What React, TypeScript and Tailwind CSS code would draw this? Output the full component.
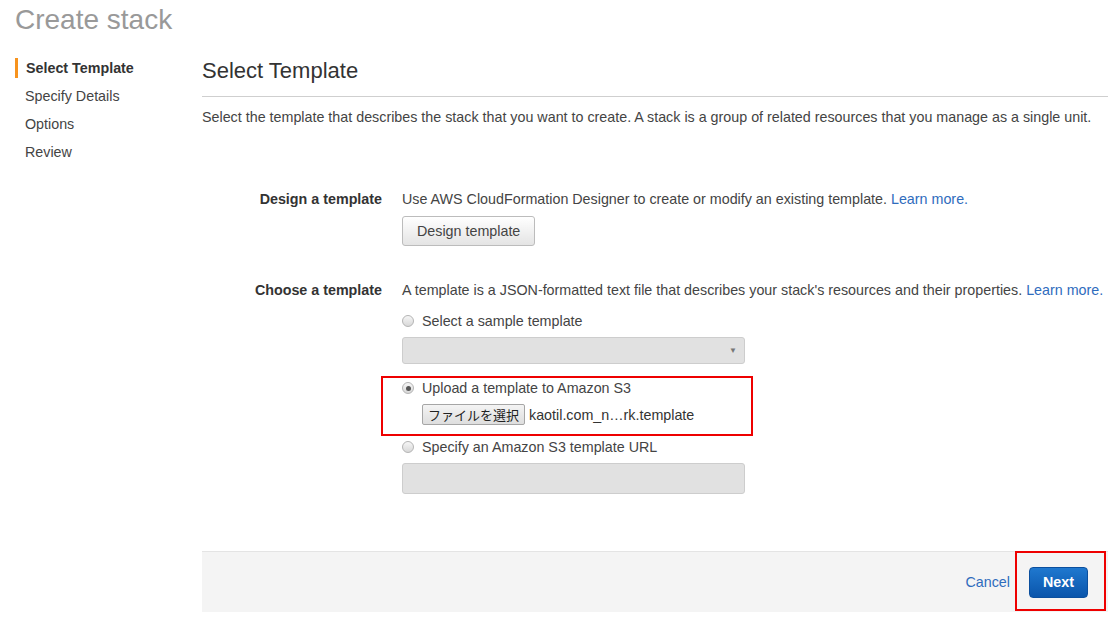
import React from 'react';

function Radio({ checked = false }: { checked?: boolean }) {
  return (
    <span className="w-[12px] h-[12px] rounded-full border border-[#b4b4b4] bg-gradient-to-b from-[#f6f6f6] to-[#d8d8d8] flex items-center justify-center shrink-0">
      {checked && <span className="w-[5px] h-[5px] rounded-full bg-[#555]" />}
    </span>
  );
}

function RadioRow({ label, checked }: { label: string; checked?: boolean }) {
  return (
    <label className="flex items-center gap-[8px] leading-[20px] h-[20px]">
      <Radio checked={checked} />
      <span>{label}</span>
    </label>
  );
}

export default function App() {
  const steps = ['Select Template', 'Specify Details', 'Options', 'Review'];

  return (
    <div className="min-h-[617px] w-[1117px] bg-white pl-[15px] pr-[9px] text-[14.3px] text-[#444] font-['Liberation_Sans',Arial,sans-serif]">
      <h1 className="h-[50px] pt-[3px] text-[28px] leading-[34px] text-[#999]">Create stack</h1>

      <div className="flex">
        {/* wizard steps */}
        <nav className="w-[187px] shrink-0 pt-[8px] flex flex-col gap-[8px]">
          {steps.map((s, i) =>
            i === 0 ? (
              <div key={s} className="h-[20px] leading-[20px] border-l-[3px] border-[#f7931e] pl-[8px] font-bold text-[#333]">
                {s}
              </div>
            ) : (
              <div key={s} className="h-[20px] leading-[20px] pl-[10px] text-[#444]">
                {s}
              </div>
            )
          )}
        </nav>

        <main className="flex-1 pt-[8px]">
          <h2 className="text-[22px] leading-[26px] pb-[12px] border-b border-[#cfcfcf] text-[#333]">Select Template</h2>
          <p className="mt-[10px] leading-[20px] whitespace-nowrap">
            Select the template that describes the stack that you want to create. A stack is a group of related resources that you manage as a single unit.
          </p>

          {/* Design a template */}
          <div className="mt-[62px] flex gap-[20px]">
            <div className="w-[180px] shrink-0 text-right font-bold leading-[20px] text-[#333]">Design a template</div>
            <div className="flex flex-col items-start">
              <div className="leading-[20px] whitespace-nowrap">
                Use AWS CloudFormation Designer to create or modify an existing template.{' '}
                <a className="text-[#2f6cbd]">Learn more.</a>
              </div>
              <button className="mt-[7px] h-[30px] px-[14px] rounded-[3px] border border-[#bcbcbc] bg-gradient-to-b from-[#ffffff] to-[#e4e4e4] text-[#444] leading-[20px]">
                Design template
              </button>
            </div>
          </div>

          {/* Choose a template */}
          <div className="mt-[34px] flex gap-[20px]">
            <div className="w-[180px] shrink-0 text-right font-bold leading-[20px] text-[#333]">Choose a template</div>
            <div className="flex flex-col">
              <div className="leading-[20px] whitespace-nowrap">
                A template is a JSON-formatted text file that describes your stack's resources and their properties.{' '}
                <a className="text-[#2f6cbd]">Learn more.</a>
              </div>

              <div className="mt-[11px]">
                <RadioRow label="Select a sample template" />
              </div>
              <div className="mt-[6px] w-[343px] h-[27px] rounded-[3px] border border-[#cdcdcd] bg-[#e1e1e1] flex items-center justify-end pr-[7px]">
                <span className="text-[8px] text-[#777]">▼</span>
              </div>

              <div className="relative mt-[14px]">
                <RadioRow label="Upload a template to Amazon S3" checked />
                <div className="mt-[6px] pl-[20px] flex items-center gap-[4px] h-[21px]">
                  <button className="h-[21px] px-[5px] rounded-[2px] border border-[#a6a6a6] bg-gradient-to-b from-[#f4f4f4] to-[#dedede] text-[13px] leading-[19px] text-[#222] font-['Noto_Sans_CJK_JP',sans-serif]">
                    ファイルを選択
                  </button>
                  <span className="leading-[20px] text-[#333]">kaotil.com_n…rk.template</span>
                </div>
                <div className="absolute left-[-21px] top-[-2px] w-[372px] h-[60px] border-2 border-[#ee0000] pointer-events-none" />
              </div>

              <div className="mt-[12px]">
                <RadioRow label="Specify an Amazon S3 template URL" />
              </div>
              <div className="mt-[6px] w-[343px] h-[31px] rounded-[3px] border border-[#cdcdcd] bg-[#e1e1e1]" />
            </div>
          </div>

          {/* footer */}
          <div className="mt-[57px] h-[61px] border-t border-[#e4e4e4] bg-[#f4f4f4] flex items-center justify-end gap-[19px] pr-[20px]">
            <a className="text-[#2f6cbd] leading-[20px]">Cancel</a>
            <div className="relative">
              <button className="h-[31px] w-[59px] rounded-[4px] border border-[#0b4f9e] bg-gradient-to-b from-[#1f78cf] to-[#0a55ab] text-white font-bold leading-[20px]">
                Next
              </button>
              <div className="absolute left-[-14px] top-[-16px] w-[91px] h-[60px] border-2 border-[#ee0000] pointer-events-none" />
            </div>
          </div>
        </main>
      </div>
    </div>
  );
}
